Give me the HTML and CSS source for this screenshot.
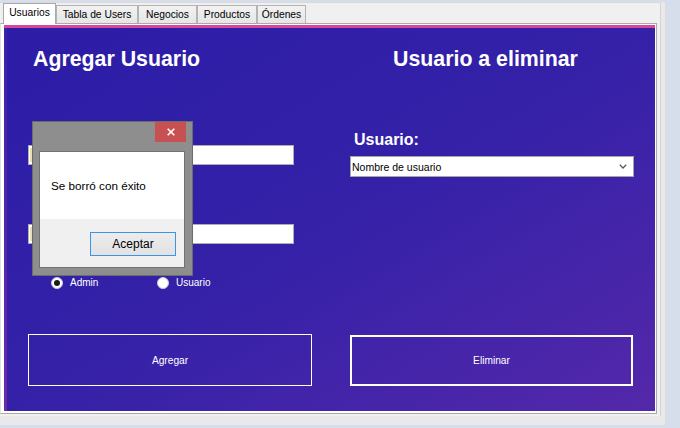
FILE: index.html
```html
<!DOCTYPE html>
<html lang="es">
<head>
<meta charset="utf-8">
<title>Usuarios</title>
<link rel="stylesheet" href="styles.css">
</head>
<body>
<div class="frame">
  <div class="tabcontrol">
    <div class="tabs">
      <div class="tab tab-active tab-usuarios">Usuarios</div>
      <div class="tab tab-tabla">Tabla de Users</div>
      <div class="tab tab-negocios">Negocios</div>
      <div class="tab tab-productos">Productos</div>
      <div class="tab tab-ordenes">Órdenes</div>
    </div>
    <div class="tabpage">
      <div class="panel">
        <section class="col col-left">
          <h2 class="title title-left">Agregar Usuario</h2>
          <div class="textbox textbox-1"><span class="tb-hint"></span></div>
          <div class="textbox textbox-2"><span class="tb-hint"></span></div>
          <div class="radios">
            <label class="radio-opt"><span class="radio radio-checked"></span><span class="radio-text">Admin</span></label>
            <label class="radio-opt"><span class="radio"></span><span class="radio-text">Usuario</span></label>
          </div>
          <div class="action action-add">Agregar</div>
        </section>
        <section class="col col-right">
          <h2 class="title title-right">Usuario a eliminar</h2>
          <div class="field-label">Usuario:</div>
          <div class="combo">
            <span class="combo-text">Nombre de usuario</span>
            <svg class="combo-arrow" width="8" height="5" viewBox="0 0 8 5"><polyline points="0.8,0.8 4,4 7.2,0.8" fill="none" stroke="#5a5a5a" stroke-width="1.3"/></svg>
          </div>
          <div class="action action-del">Eliminar</div>
        </section>
      </div>
    </div>
  </div>
</div>

<div class="dialog">
  <div class="dialog-close">
    <svg width="8" height="8" viewBox="0 0 8 8"><path d="M0.7 0.7 L7.3 7.3 M7.3 0.7 L0.7 7.3" stroke="#ffffff" stroke-width="1.6" fill="none"/></svg>
  </div>
  <div class="dialog-client">
    <div class="dialog-msg">Se borró con éxito</div>
    <div class="dialog-foot">
      <div class="dialog-btn">Aceptar</div>
    </div>
  </div>
</div>
</body>
</html>
```

FILE: styles.css
```css
html, body {
  margin: 0;
  padding: 0;
}

body {
  position: relative;
  width: 680px;
  height: 428px;
  overflow: hidden;
  background: #d6deec;
  font-family: "Liberation Sans", Arial, sans-serif;
}

.frame {
  width: 666px;
  height: 423px;
  background: #e9e9e9;
  box-sizing: border-box;
  border-right: 1px solid #dcdcdc;
}

.tabcontrol {
  width: 660px;
  height: 413px;
  margin-top: 2px;
  background: #f0f0f0;
  border-top: 1px solid #dadada;
  border-right: 1px solid #d4d4d4;
  box-sizing: content-box;
}

/* ---------- tabs ---------- */
.tabs {
  height: 20px;
  padding-left: 3px;
  display: flex;
  align-items: flex-end;
}

.tab {
  box-sizing: border-box;
  height: 18px;
  padding-top: 3px;
  line-height: 12px;
  font-size: 10.3px;
  color: #000;
  text-align: center;
  background: linear-gradient(#f2f2f2, #e6e6e6);
  border: 1px solid #b4b4b4;
  border-bottom: none;
  white-space: nowrap;
}

.tab-active {
  position: relative;
  z-index: 1;
  height: 21px;
  margin-bottom: -1px;
  background: #ffffff;
  border-color: #a9a9a9;
}

.tab-usuarios { width: 53px; }
.tab-tabla { width: 82px; }
.tab-negocios { width: 59px; }
.tab-productos { width: 60px; }
.tab-ordenes { width: 49px; }

/* ---------- tab page ---------- */
.tabpage {
  box-sizing: border-box;
  width: 657px;
  height: 391px;
  background: #ffffff;
  border: 1px solid #a9a9a9;
  border-left-color: #e2e2e2;
  padding: 1px 1px 2px 3px;
}

.panel {
  box-sizing: border-box;
  width: 651px;
  height: 386px;
  border-top: 3px solid #d6469d;
  padding-left: 24px;
  background:
    linear-gradient(#3b22a8, #6a2ba8) left top / 3px 100% no-repeat,
    linear-gradient(to bottom right, #2c1ca6 0%, #3421a8 50%, #5428aa 100%);
  display: grid;
  grid-template-columns: 284px 284px;
  column-gap: 38px;
  align-items: start;
}

.col {
  display: flex;
  flex-direction: column;
}

.title {
  margin: 19px 0 0;
  font-size: 21.33px;
  line-height: 24px;
  font-weight: bold;
  color: #ffffff;
  white-space: nowrap;
}

.title-left { margin-left: 5px; }
.title-right { margin-left: 43px; }

/* ---------- left column ---------- */
.textbox {
  box-sizing: border-box;
  width: 266px;
  height: 20px;
  background: #ffffff;
  border: 1px solid #aeaeae;
  display: flex;
  align-items: center;
  padding-left: 1px;
}

.textbox-1 { margin-top: 74px; }
.textbox-2 { margin-top: 59px; }

.tb-hint {
  width: 2px;
  height: 14px;
  background: #ecdcb0;
}

.radios {
  margin-top: 33px;
  height: 12px;
  padding-left: 23px;
  display: flex;
  align-items: center;
}

.radio-opt {
  width: 106px;
  display: flex;
  align-items: center;
  gap: 7px;
}

.radio {
  box-sizing: border-box;
  width: 12px;
  height: 12px;
  border-radius: 50%;
  background: #ffffff;
  border: 1px solid #c9c9d8;
  display: flex;
  align-items: center;
  justify-content: center;
}

.radio-checked::after {
  content: "";
  width: 6px;
  height: 6px;
  border-radius: 50%;
  background: #1c1c1c;
}

.radio-text {
  font-size: 10px;
  line-height: 12px;
  color: #ffffff;
}

.action {
  box-sizing: border-box;
  display: flex;
  align-items: center;
  justify-content: center;
  color: #ffffff;
  font-size: 10.2px;
}

.action-add {
  margin-top: 45px;
  width: 284px;
  height: 52px;
  border: 1px solid #ffffff;
}

/* ---------- right column ---------- */
.field-label {
  margin: 60px 0 0 4px;
  font-size: 16px;
  line-height: 18px;
  font-weight: bold;
  color: #ffffff;
}

.combo {
  box-sizing: border-box;
  margin-top: 7px;
  width: 284px;
  height: 21px;
  background: #ffffff;
  border: 1px solid #a5a5a5;
  display: flex;
  align-items: center;
  justify-content: space-between;
  padding: 0 6px 0 1px;
}

.combo-text {
  font-size: 10.5px;
  color: #000000;
}

.action-del {
  margin-top: 158px;
  width: 283px;
  height: 51px;
  border: 2px solid #ffffff;
}

/* ---------- message box ---------- */
.dialog {
  position: absolute;
  left: 32px;
  top: 121px;
  width: 161px;
  height: 155px;
  box-sizing: border-box;
  background: #8e8e8e;
  border: 1px solid #6c6c6c;
  padding: 29px 7px 7px 6px;
}

.dialog-close {
  position: absolute;
  top: 0;
  right: 6px;
  width: 31px;
  height: 20px;
  background: #c75050;
  display: flex;
  align-items: center;
  justify-content: center;
}

.dialog-client {
  box-sizing: border-box;
  width: 146px;
  height: 117px;
  border: 1px solid #727272;
  background: #f0f0f0;
  display: flex;
  flex-direction: column;
}

.dialog-msg {
  box-sizing: border-box;
  height: 67px;
  background: #ffffff;
  padding: 26px 0 0 11px;
  font-size: 11.7px;
  line-height: 15px;
  color: #000000;
  white-space: nowrap;
}

.dialog-foot {
  display: flex;
  justify-content: flex-end;
  padding: 13px 8px 0 0;
}

.dialog-btn {
  box-sizing: border-box;
  width: 86px;
  height: 24px;
  border: 1px solid #3c94e6;
  background: linear-gradient(#ececec, #e2e2e2);
  display: flex;
  align-items: center;
  justify-content: center;
  font-size: 12px;
  color: #000000;
}
```
